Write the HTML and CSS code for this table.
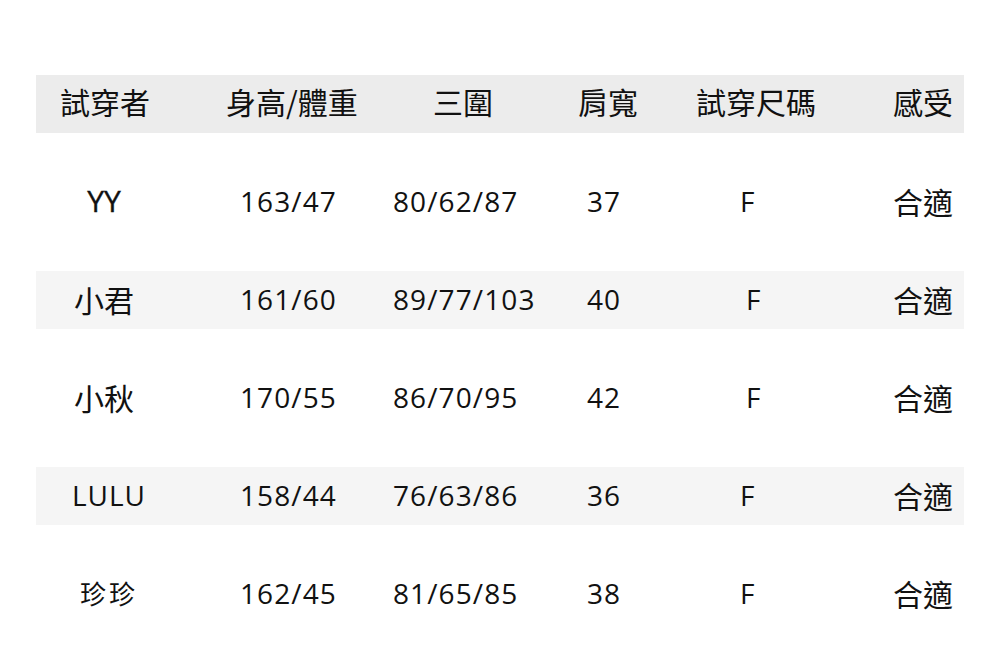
FILE: index.html
```html
<!DOCTYPE html>
<html lang="zh-Hant">
<head>
<meta charset="utf-8">
<title>試穿表</title>
<link rel="stylesheet" href="styles.css">
</head>
<body>
<div class="table">
  <div class="row head">
    <div class="c c1">試穿者</div>
    <div class="c c2">身高/體重</div>
    <div class="c c3">三圍</div>
    <div class="c c4">肩寬</div>
    <div class="c c5">試穿尺碼</div>
    <div class="c c6">感受</div>
  </div>
  <div class="row">
    <div class="c c1 latin">YY</div>
    <div class="c c2">163/47</div>
    <div class="c c3">80/62/87</div>
    <div class="c c4">37</div>
    <div class="c c5">F</div>
    <div class="c c6">合適</div>
  </div>
  <div class="row alt">
    <div class="c c1">小君</div>
    <div class="c c2">161/60</div>
    <div class="c c3">89/77/103</div>
    <div class="c c4">40</div>
    <div class="c c5 shift">F</div>
    <div class="c c6">合適</div>
  </div>
  <div class="row">
    <div class="c c1">小秋</div>
    <div class="c c2">170/55</div>
    <div class="c c3">86/70/95</div>
    <div class="c c4">42</div>
    <div class="c c5 shift">F</div>
    <div class="c c6">合適</div>
  </div>
  <div class="row alt">
    <div class="c c1 lulu">LULU</div>
    <div class="c c2">158/44</div>
    <div class="c c3">76/63/86</div>
    <div class="c c4">36</div>
    <div class="c c5">F</div>
    <div class="c c6">合適</div>
  </div>
  <div class="row">
    <div class="c c1 small">珍珍</div>
    <div class="c c2">162/45</div>
    <div class="c c3">81/65/85</div>
    <div class="c c4">38</div>
    <div class="c c5">F</div>
    <div class="c c6">合適</div>
  </div>
</div>
</body>
</html>
```
FILE: styles.css
```css
html, body {
  margin: 0;
  padding: 0;
  background: #ffffff;
}
body {
  font-family: "Open Sans", "Noto Sans CJK TC", sans-serif;
  color: #111111;
}
.table {
  margin: 75px 0 0 36px;
  width: 928px;
  display: flex;
  flex-direction: column;
  gap: 40px;
}
.row {
  height: 58px;
  display: grid;
  grid-template-columns: 140px 214px 170px 120px 160px 124px;
  align-items: center;
  font-size: 28px;
  letter-spacing: 1.1px;
}
.row.head {
  background: #ececec;
  font-family: "Noto Sans CJK TC", sans-serif;
  font-size: 30px;
  letter-spacing: 0;
}
.row.alt {
  background: #f5f5f5;
}
.c {
  white-space: nowrap;
  line-height: 1;
  padding-bottom: 2px;
}
.head .c {
  padding-bottom: 6px;
}
.c1 {
  text-align: center;
  font-family: "Noto Sans CJK TC", "Open Sans", sans-serif;
  font-size: 30px;
  letter-spacing: 0;
  padding-right: 4px;
}
.c1.latin {
  font-family: "Open Sans", sans-serif;
  font-size: 30px;
  font-weight: 400;
  letter-spacing: 0;
  padding-right: 4px;
  -webkit-text-stroke: 0.4px #111111;
}
.c1.lulu {
  font-family: "Open Sans", sans-serif;
  font-size: 28px;
  letter-spacing: 1px;
  padding-left: 6px;
  padding-right: 0;
}
.c1.small {
  font-size: 26px;
  letter-spacing: 3px;
  padding-left: 6px;
  padding-right: 0;
}
.c2 { padding-left: 64px; }
.c3 { padding-left: 3px; }
.c4 { padding-left: 27px; }
.c5 { padding-left: 60px; }
.c5.shift { padding-left: 66px; }
.c6 {
  padding-left: 53px;
  font-family: "Noto Sans CJK TC", sans-serif;
  font-size: 30px;
  letter-spacing: 0;
}
.head .c1 { padding-right: 2px; }
.head .c2 { padding-left: 50px; }
.head .c3 { padding-left: 43px; }
.head .c4 { padding-left: 18px; }
.head .c5 { padding-left: 16px; }
.head .c6 { padding-left: 53px; }
```
